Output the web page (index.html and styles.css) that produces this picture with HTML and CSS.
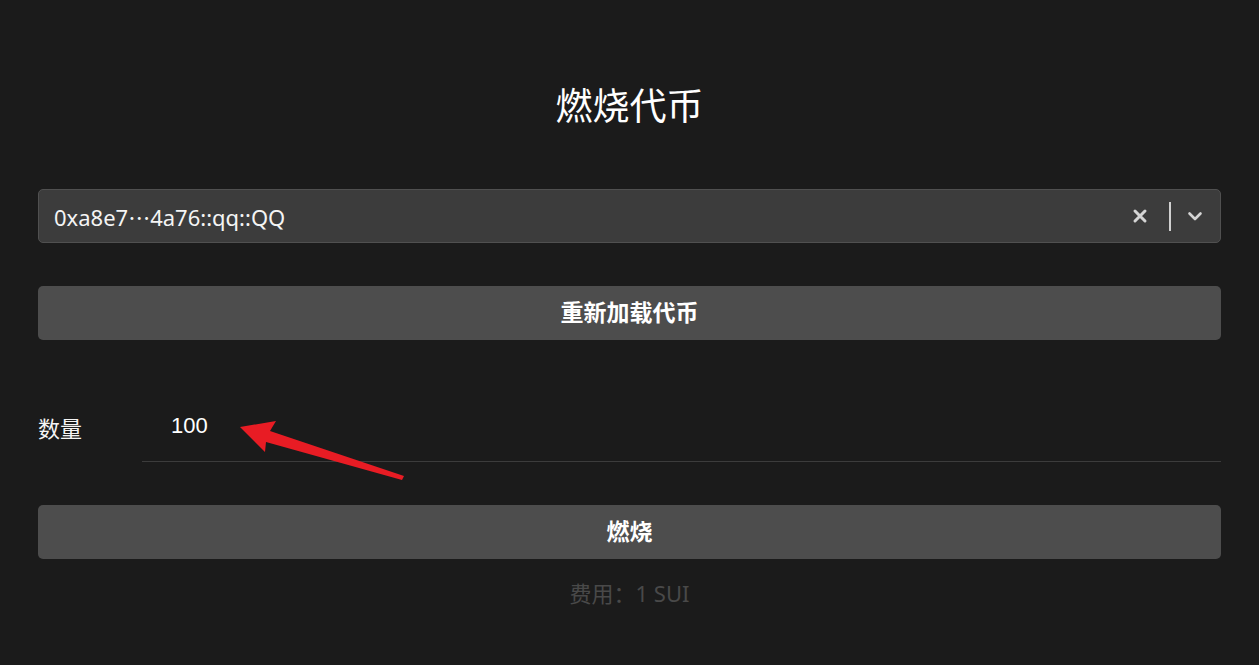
FILE: index.html
```html
<!DOCTYPE html>
<html lang="zh">
<head>
<meta charset="utf-8">
<title>燃烧代币</title>
<link rel="stylesheet" href="styles.css">
</head>
<body>
<main class="page">
  <h1 class="title">燃烧代币</h1>
  <div class="select">
    <span class="select-value">0xa8e7<span class="ellipsis">⋯</span>4a76::qq::QQ</span>
    <div class="select-icons">
      <svg class="icon-clear" width="16" height="16" viewBox="0 0 16 16"><path d="M3 3 L13 13 M13 3 L3 13" stroke="#d4d4d4" stroke-width="3" stroke-linecap="round"/></svg>
      <span class="divider"></span>
      <svg class="icon-chevron" width="18" height="18" viewBox="0 0 18 18"><path d="M3.5 6.5 L9 12 L14.5 6.5" fill="none" stroke="#d4d4d4" stroke-width="2.6" stroke-linecap="round" stroke-linejoin="round"/></svg>
    </div>
  </div>
  <button class="btn btn-reload">重新加载代币</button>
  <div class="field">
    <label class="field-label">数量</label>
    <div class="field-input">100</div>
  </div>
  <button class="btn btn-burn">燃烧</button>
  <p class="fee">费用：1 SUI</p>
</main>
<svg class="arrow" width="1259" height="665" viewBox="0 0 1259 665">
  <polygon points="240,427 276,421 270,431 404,476 402,480 266,442 265,452" fill="#e81c24"/>
</svg>
</body>
</html>
```
FILE: styles.css
```css
html, body {
  margin: 0;
  padding: 0;
  background: #1b1b1b;
  height: 100%;
}
body {
  font-family: "Noto Sans", "Noto Sans CJK SC", sans-serif;
  color: #ffffff;
  position: relative;
  overflow: hidden;
}
.page {
  padding: 78px 38px 0 38px;
  display: flex;
  flex-direction: column;
}
.title {
  margin: 0;
  font-size: 37px;
  font-weight: 400;
  line-height: 52px;
  text-align: center;
  font-family: "Noto Sans CJK SC", sans-serif;
}
.select {
  margin-top: 59px;
  height: 54px;
  box-sizing: border-box;
  background: #3c3c3c;
  border: 1px solid #505050;
  border-radius: 5px;
  display: flex;
  align-items: center;
  justify-content: space-between;
  padding: 0 16px 0 15px;
}
.select-value {
  font-size: 22px;
  color: #f4f4f4;
  font-family: "Noto Sans", "Noto Sans CJK SC", sans-serif;
}
.ellipsis {
  font-family: "Noto Sans CJK SC", sans-serif;
}
.select-icons {
  display: flex;
  align-items: center;
}
.icon-clear { margin-right: 21px; }
.divider {
  width: 2px;
  height: 29px;
  background: #d0d0d0;
  margin-right: 15px;
}
.btn {
  height: 54px;
  border: none;
  border-radius: 5px;
  background: #4d4d4d;
  color: #ffffff;
  font-family: "Noto Sans CJK SC", sans-serif;
  font-weight: 700;
  font-size: 23px;
  line-height: 30px;
  padding: 0 0 4px 0;
}
.btn-reload { margin-top: 43px; }
.field {
  margin-top: 55px;
  display: flex;
  align-items: center;
  height: 67px;
}
.field-label {
  width: 104px;
  font-size: 22px;
  font-family: "Noto Sans CJK SC", sans-serif;
  color: #f4f4f4;
  padding-bottom: 4px;
}
.field-input {
  flex: 1;
  height: 67px;
  box-sizing: border-box;
  border-bottom: 1px solid #3c3c3c;
  display: flex;
  align-items: center;
  padding: 0 0 4px 29px;
  font-family: "Liberation Sans", Arial, sans-serif;
  font-size: 22px;
  color: #ffffff;
}
.btn-burn { margin-top: 43px; }
.fee {
  margin: 20px 0 0 0;
  text-align: center;
  font-size: 22px;
  line-height: 28px;
  color: #494949;
  font-family: "Noto Sans", "Noto Sans CJK SC", sans-serif;
}
.arrow {
  position: absolute;
  left: 0;
  top: 0;
  pointer-events: none;
}
```
